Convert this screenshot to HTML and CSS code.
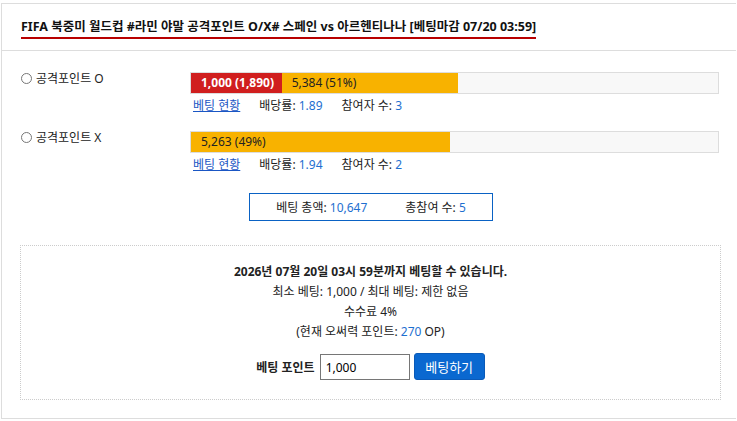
FILE: index.html
```html
<!DOCTYPE html>
<html lang="ko">
<head>
  <meta charset="UTF-8">
  <title>베팅</title>
  <link rel="stylesheet" href="styles.css">
</head>
<body>
  <div class="bet-card">
    <div class="bet-head">
      <span class="bet-title">FIFA 북중미 월드컵 #라민 야말 공격포인트 O/X# 스페인 vs 아르헨티나나 [베팅마감 07/20 03:59]</span>
    </div>
    <div class="bet-body">
      <div class="opt-row">
        <label class="opt-label"><input type="radio" name="pick"> 공격포인트 O</label>
        <div class="opt-main">
          <div class="bar">
            <div class="bar-mine" style="width:17.2%">1,000 (1,890)</div>
            <div class="bar-fill" style="width:33.5%">5,384 (51%)</div>
          </div>
          <div class="opt-meta">
            <a href="#">베팅 현황</a>
            <span>배당률: <b class="num">1.89</b></span>
            <span>참여자 수: <b class="num">3</b></span>
          </div>
        </div>
      </div>
      <div class="opt-row">
        <label class="opt-label"><input type="radio" name="pick"> 공격포인트 X</label>
        <div class="opt-main">
          <div class="bar">
            <div class="bar-fill" style="width:49.2%">5,263 (49%)</div>
          </div>
          <div class="opt-meta">
            <a href="#">베팅 현황</a>
            <span>배당률: <b class="num">1.94</b></span>
            <span>참여자 수: <b class="num">2</b></span>
          </div>
        </div>
      </div>
      <div class="total-wrap">
        <div class="total">
          <span>베팅 총액: <b class="num">10,647</b></span>
          <span>총참여 수: <b class="num">5</b></span>
        </div>
      </div>
      <div class="bet-form">
        <p class="deadline">2026년 07월 20일 03시 59분까지 베팅할 수 있습니다.</p>
        <p>최소 베팅: 1,000 / 최대 베팅: 제한 없음</p>
        <p>수수료 4%</p>
        <p>(현재 오써력 포인트: <b class="num">270</b> OP)</p>
        <div class="form-row">
          <span class="form-label">베팅 포인트</span>
          <input type="text" class="point-input" value="1,000">
          <button class="bet-btn">베팅하기</button>
        </div>
      </div>
    </div>
  </div>
</body>
</html>
```

FILE: styles.css
```css
body { margin: 3px 1px 0 1px; font-family: "Noto Sans", "Noto Sans CJK KR", sans-serif; font-size: 12px; color: #222; background: #fff; }
.bet-card { border: 1px solid #ddd; border-right: none; height: 416px; box-sizing: border-box; }
.bet-head { padding: 14px 19px 0; height: 32px; border-bottom: 1px solid #ddd; }
.bet-title { display: inline-block; font-size: 12.5px; font-weight: bold; line-height: 16px; padding-bottom: 2px; border-bottom: 2px solid #b80000; color: #111; }
.bet-body { padding: 21px 17px 0 19px; }
.opt-row { display: flex; height: 59px; }
.opt-label { width: 169px; display: flex; align-items: flex-start; gap: 4px; line-height: 14px; }
.opt-label input { margin: 1px 0 0; width: 11px; height: 11px; }
.opt-main { flex: 1; }
.bar { display: flex; height: 20px; border: 1px solid #ddd; background: #f8f8f8; }
.bar-mine { background: #d01e1e; color: #fff; font-weight: bold; line-height: 20px; padding-left: 10px; box-sizing: border-box; white-space: nowrap; }
.bar-fill { background: #f8b200; color: #222; line-height: 20px; padding-left: 10px; box-sizing: border-box; white-space: nowrap; }
.opt-meta { display: flex; gap: 19px; margin-top: 4px; padding-left: 3px; line-height: 16px; }
.opt-meta a { color: #1a56c4; text-decoration: underline; }
.num { font-weight: normal; color: #1e6fd0; }
.total-wrap { text-align: center; margin-top: 3px; padding-left: 2px; }
.total { display: inline-flex; gap: 38px; border: 1px solid #0a62c4; padding: 0 26px; height: 26px; align-items: center; }
.bet-form { margin: 24px 0 0 -1px; width: 701px; height: 155px; box-sizing: border-box; border: 1px dotted #ccc; text-align: center; padding-top: 15px; }
.bet-form p { margin: 0; line-height: 20px; }
.bet-form .deadline { font-weight: bold; line-height: 21px; }
.form-row { display: flex; justify-content: center; align-items: center; gap: 4px; margin-top: 11px; }
.form-label { font-weight: bold; margin-right: 1px; }
.point-input { width: 90px; height: 26px; box-sizing: border-box; border: 1px solid #767676; padding: 2px 5px 0; font: inherit; font-size: 12px; }
.bet-btn { height: 27px; width: 71px; background: #0a68d0; color: #fff; border: 1px solid #0a5ab8; border-radius: 3px; font: inherit; font-size: 13px; cursor: pointer; }
```
